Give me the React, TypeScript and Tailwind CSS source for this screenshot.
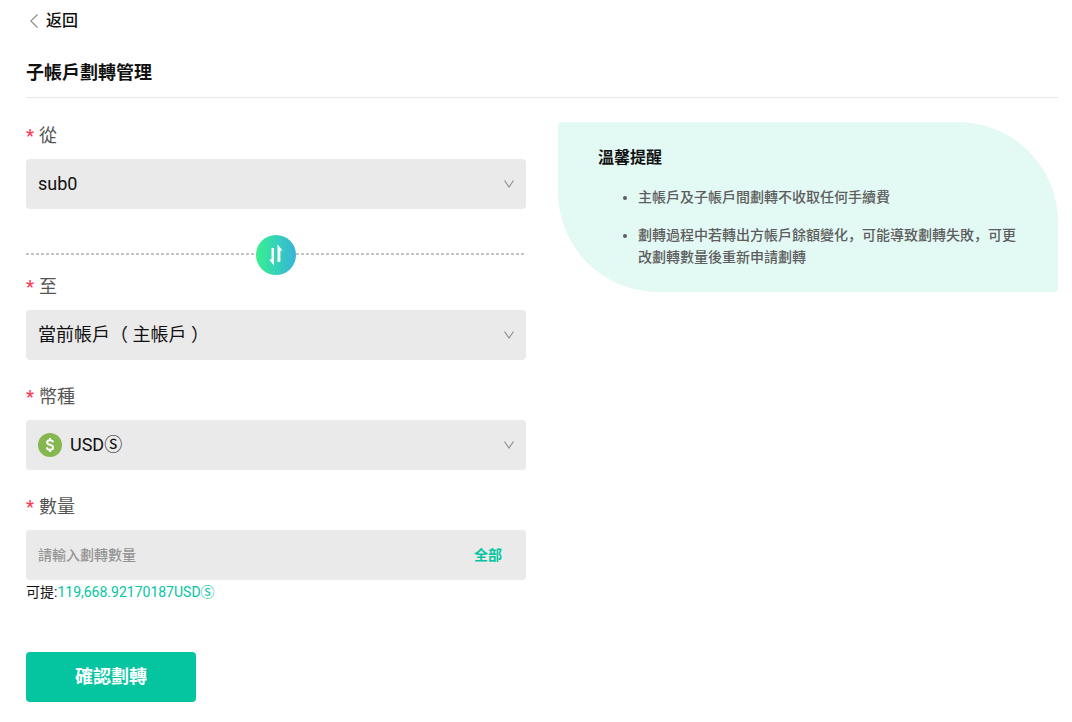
import { FC, ReactNode, useState } from 'react';

const AVAILABLE = '119,668.92170187';

const accounts = [
  { id: 'sub0', label: 'sub0' },
  { id: 'main', label: '當前帳戶（ 主帳戶 ）' },
];

const coins = [{ id: 'usds', label: 'USDⓈ' }];

const tips = [
  '主帳戶及子帳戶間劃轉不收取任何手續費',
  '劃轉過程中若轉出方帳戶餘額變化，可能導致劃轉失敗，可更改劃轉數量後重新申請劃轉',
];

interface LabelProps {
  htmlFor: string;
  children: ReactNode;
}

const FieldLabel: FC<LabelProps> = ({ htmlFor, children }) => (
  <label htmlFor={htmlFor} className="mb-[10px] flex items-center gap-[5px] text-lg leading-[27px] text-[#555555]">
    <span className="font-medium text-[#ff3b57]">*</span>
    {children}
  </label>
);

interface SelectFieldProps {
  id: string;
  label: string;
  value: string;
  options: { id: string; label: string }[];
  onChange: (value: string) => void;
  icon?: ReactNode;
}

const SelectField: FC<SelectFieldProps> = ({ id, label, value, options, onChange, icon }) => (
  <div>
    <FieldLabel htmlFor={id}>{label}</FieldLabel>
    <div className="relative">
      {icon && <span className="pointer-events-none absolute inset-y-0 left-3 flex items-center">{icon}</span>}
      <select
        id={id}
        value={value}
        onChange={(e) => onChange(e.target.value)}
        className={`block h-[50px] w-full appearance-none rounded bg-[#eaeaea] pr-10 text-lg text-[#111111] outline-none ${
          icon ? 'pl-11' : 'pl-3'
        }`}
      >
        {options.map((o) => (
          <option key={o.id} value={o.id}>
            {o.label}
          </option>
        ))}
      </select>
      <span className="pointer-events-none absolute inset-y-0 right-3 flex items-center">
        <svg width="10" height="8" viewBox="0 0 10 8" fill="none" stroke="#8c8c8c" strokeWidth="1.1">
          <path d="M0.5 0.5L5 7L9.5 0.5" />
        </svg>
      </span>
    </div>
  </div>
);

const CoinIcon: FC = () => (
  <svg width="24" height="24" viewBox="0 0 24 24" fill="none">
    <circle cx="12" cy="12" r="12" fill="#85b74f" />
    <path
      d="M15 9.4C14.8 7.9 13.7 7.2 12 7.2C10.2 7.2 9.1 8.1 9.1 9.4C9.1 12.4 15.1 11.2 15.1 14.4C15.1 15.8 13.9 16.7 12 16.7C10.1 16.7 9 15.8 8.8 14.3M12 4.9V7.2M12 16.7V19"
      stroke="white"
      strokeWidth="2"
    />
  </svg>
);

const App: FC = () => {
  const [from, setFrom] = useState('sub0');
  const [to, setTo] = useState('main');
  const [coin, setCoin] = useState('usds');
  const [amount, setAmount] = useState('');

  const swap = () => {
    setFrom(to);
    setTo(from);
  };

  return (
    <main
      lang="zh-Hans"
      className="bg-white pt-[9px] pr-[14px] pb-5 pl-[26px] font-[Roboto,'Noto_Sans_CJK_SC',sans-serif] text-[#111111]"
    >
      {/* Back link */}
      <a href="#back" className="flex h-6 w-fit items-center gap-2 pl-1 text-base font-medium">
        <svg width="8" height="14" viewBox="0 0 8 14" fill="none" stroke="#8c8c8c" strokeWidth="1.2">
          <path d="M7.5 0.5L0.8 7L7.5 13.5" />
        </svg>
        返回
      </a>

      <h1 className="mt-7 border-b border-[#e8e8e8] pb-3 text-lg leading-6 font-bold">子帳戶劃轉管理</h1>

      <div className="mt-6 grid grid-cols-2 items-start gap-8">
        <form onSubmit={(e) => e.preventDefault()}>
          <SelectField id="from" label="從" value={from} options={accounts} onChange={setFrom} />

          {/* Swap direction */}
          <div className="relative mt-[26px] -mb-[2px] flex h-10 items-center justify-center">
            <svg className="absolute inset-x-0 top-[18px] h-[2px] w-full">
              <line
                x1="0"
                y1="1"
                x2="100%"
                y2="1"
                stroke="#c4c4c4"
                strokeWidth="2"
                strokeDasharray="3 2"
              />
            </svg>
            <button
              type="button"
              onClick={swap}
              aria-label="切換"
              className="relative flex h-10 w-10 items-center justify-center rounded-full bg-linear-to-r from-[#3bf08c] to-[#38b2d8]"
            >
              <svg width="14" height="22" viewBox="0 0 14 22" fill="white">
                <path d="M2.5 4.2Q3.8 3.2 5 4.2V21.5L0.2 15.5H2.5Z" />
                <path d="M8.5 0.2L13.6 6.6H11.4V17.5Q10 18.5 8.5 17.5Z" />
              </svg>
            </button>
          </div>

          <div className="flex flex-col gap-[23px]">
            <SelectField id="to" label="至" value={to} options={accounts} onChange={setTo} />
            <SelectField id="coin" label="幣種" value={coin} options={coins} onChange={setCoin} icon={<CoinIcon />} />

            <div>
              <FieldLabel htmlFor="amount">數量</FieldLabel>
              <div className="flex h-[50px] items-center rounded bg-[#eaeaea] pr-6 pl-3">
                <input
                  id="amount"
                  value={amount}
                  onChange={(e) => setAmount(e.target.value)}
                  placeholder="請輸入劃轉數量"
                  className="h-full min-w-0 flex-1 bg-transparent text-sm outline-none placeholder:font-medium placeholder:text-[#959595]"
                />
                <button
                  type="button"
                  onClick={() => setAmount(AVAILABLE.replace(',', ''))}
                  className="text-sm font-bold text-[#05c5a1]"
                >
                  全部
                </button>
              </div>
              <p className="text-sm leading-6">
                可提:<span className="text-[#05c5a1]">{AVAILABLE}USDⓈ</span>
              </p>
            </div>
          </div>

          <button type="submit" className="mt-12 h-[50px] w-[170px] rounded bg-[#05c5a1] text-lg font-bold text-white">
            確認劃轉
          </button>
        </form>

        {/* Tips */}
        <aside className="rounded-[4px_100px_4px_100px] bg-[#e3f9f4] px-10 py-6">
          <h2 className="text-base leading-6 font-bold">溫馨提醒</h2>
          <ul className="mt-4 flex list-disc flex-col gap-4 pl-10 text-sm leading-[22px] font-medium text-[#5e5e5e]">
            {tips.map((tip) => (
              <li key={tip}>{tip}</li>
            ))}
          </ul>
        </aside>
      </div>
    </main>
  );
};

export default App;
